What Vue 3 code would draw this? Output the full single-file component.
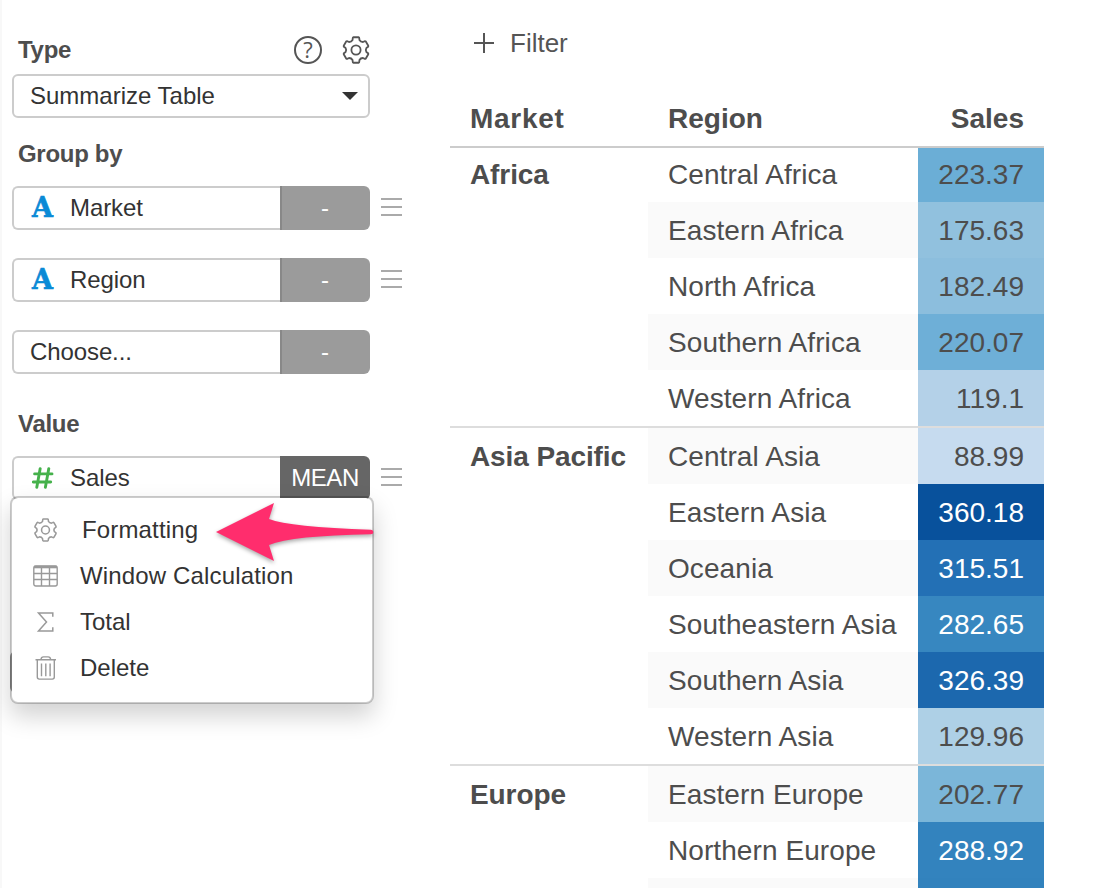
<script setup>
const groupBy = [
  { label: 'Market', typed: true },
  { label: 'Region', typed: true },
  { label: 'Choose...', typed: false },
]

// Six-toothed cog outline around (14, 14)
const at = (deg, r) => {
  const a = (deg * Math.PI) / 180
  return `${(14 + r * Math.sin(a)).toFixed(2)} ${(14 - r * Math.cos(a)).toFixed(2)}`
}
const gear = 'M' + [0, 60, 120, 180, 240, 300].map((d) =>
  `${at(d - 19, 10.6)}L${at(d - 16, 12)}Q${at(d - 15, 13)} ${at(d - 11, 13)}` +
  `L${at(d + 11, 13)}Q${at(d + 15, 13)} ${at(d + 16, 12)}L${at(d + 19, 10.6)}` +
  `Q${at(d + 30, 9.2)} ${at(d + 41, 10.6)}`).join('L') + 'Z'

const groups = [
  {
    market: 'Africa',
    rows: [
      ['Central Africa', '223.37', '#6baed6'],
      ['Eastern Africa', '175.63', '#91c1de'],
      ['North Africa', '182.49', '#8cbedd'],
      ['Southern Africa', '220.07', '#6eafd7'],
      ['Western Africa', '119.1', '#b4d1e8'],
    ],
  },
  {
    market: 'Asia Pacific',
    rows: [
      ['Central Asia', '88.99', '#c6dbef'],
      ['Eastern Asia', '360.18', '#08519c', true],
      ['Oceania', '315.51', '#2370b5', true],
      ['Southeastern Asia', '282.65', '#3787c0', true],
      ['Southern Asia', '326.39', '#1c68ae', true],
      ['Western Asia', '129.96', '#aed0e6'],
    ],
  },
  {
    market: 'Europe',
    rows: [
      ['Eastern Europe', '202.77', '#7bb6d9'],
      ['Northern Europe', '288.92', '#3383be', true],
      ['', '', '#3282bd', true],
    ],
  },
]
groups.flatMap((g) => g.rows).forEach((r, i) => { r.striped = i % 2 === 1 })
</script>

<template>
  <div class="page">
    <aside class="panel">
      <div class="head">
        <h3>Type</h3>
        <span class="help">?</span>
        <svg class="cog" width="28" height="28" viewBox="0 0 28 28" fill="none" stroke="#555" stroke-width="1.8" stroke-linejoin="round">
          <path :d="gear" />
          <circle cx="14" cy="14" r="4.6" />
        </svg>
      </div>
      <div class="select">
        <span>Summarize Table</span>
        <svg width="16" height="8" viewBox="0 0 16 8"><path d="M0 0h16L8 8z" fill="#333" /></svg>
      </div>
      <h3 class="group-title">Group by</h3>
      <div v-for="g in groupBy" :key="g.label" class="row">
        <div class="field">
          <span v-if="g.typed" class="alpha">A</span>
          <span>{{ g.label }}</span>
        </div>
        <div class="func">-</div>
        <div v-if="g.typed" class="grip"><i /><i /><i /></div>
      </div>
      <h3 class="value-title">Value</h3>
      <div class="row">
        <div class="field">
          <svg class="hash" width="22" height="22" viewBox="0 0 22 22" fill="none" stroke="#45b14b" stroke-width="2.9" stroke-linecap="round">
            <path d="M8.2 1.6 4.8 20.3M16.8 1.6l-3.4 18.7M2.6 6.9h17.4M1.3 15h17.4" />
          </svg>
          <span>Sales</span>
        </div>
        <div class="func mean">MEAN</div>
        <div class="grip"><i /><i /><i /></div>
      </div>
      <div class="hidden-button" />
      <div class="menu">
        <div class="item fmt">
          <svg width="24" height="24" viewBox="0 0 28 28" fill="none" stroke="#999" stroke-width="1.8" stroke-linejoin="round">
            <path :d="gear" />
            <circle cx="14" cy="14" r="4.6" />
          </svg>
          <span>Formatting</span>
        </div>
        <div class="item win">
          <svg width="25" height="22" viewBox="0 0 25 22" fill="none" stroke="#999" stroke-width="1.4">
            <rect x=".8" y="1" width="23.4" height="20" rx="2" />
            <path d="M1 2h23" stroke-width="2.6" />
            <path d="M1 8.5h23M1 14.5h23M8.5 2v19M16.5 2v19" />
          </svg>
          <span>Window Calculation</span>
        </div>
        <div class="item">
          <svg width="24" height="20" viewBox="0 0 24 20" fill="none" stroke="#999" stroke-width="1.5">
            <path d="M19.3 4.8V1H5l8 9-8 9h14.3v-3.8" />
          </svg>
          <span>Total</span>
        </div>
        <div class="item del">
          <svg width="24" height="24" viewBox="0 0 24 24" fill="none" stroke="#999" stroke-width="1.4">
            <path d="M2 3.7h20.5M3.8 3.7v17.4q0 2 2 2h13q2 0 2-2V3.7M7.5 3.4Q7.7.9 10 .9h4.6q2.3 0 2.5 2.5M8 7.5v12.7M12.3 7.5v12.7M16.6 7.5v12.7" />
          </svg>
          <span>Delete</span>
        </div>
        <svg class="arrow" width="168" height="70" viewBox="0 0 168 70">
          <path d="M6 34 64 5 59 21Q80 29 161 31.8Q163.4 32 163.4 34Q163.4 36.2 161 36.2Q82 37.5 59 47L64 63Z" fill="#ff2d6d" />
        </svg>
      </div>
    </aside>
    <main class="main">
      <div class="filter">
        <svg width="20" height="20" viewBox="0 0 20 20"><path d="M0 10h20M10 0v20" stroke="#555" stroke-width="2" /></svg>
        <span>Filter</span>
      </div>
      <div class="thead"><b class="first">Market</b><b>Region</b><b class="num">Sales</b></div>
      <section v-for="g in groups" :key="g.market" class="group">
        <b class="market">{{ g.market }}</b>
        <div class="rows">
          <div v-for="r in g.rows" :key="r[0]" class="data" :class="{ striped: r.striped }">
            <span class="region">{{ r[0] }}</span>
            <span class="sales" :class="{ light: r[3] }" :style="{ background: r[2] }">{{ r[1] }}</span>
          </div>
        </div>
      </section>
    </main>
  </div>
</template>

<style>
body { background: #fff; overflow: hidden; }
</style>
<style scoped>
* { box-sizing: border-box; }
.page {
  display: flex; height: 888px; overflow: hidden; color: #4d4d4d;
  font-family: "Liberation Sans", Arial, sans-serif; background: #fff;
}
.panel {
  position: relative; width: 450px; flex: none; font-size: 24px; color: #333;
  border-left: 2px solid #f8f8f8; padding: 32px 0 0 10px;
}
h3 { margin: 0; padding-left: 6px; font-size: 24px; line-height: 36px; color: #4d4d4d; letter-spacing: -.3px; }
.head { display: flex; align-items: center; width: 358px; height: 42px; padding-bottom: 6px; }
.help {
  margin-left: auto; width: 28px; height: 28px; border: 2px solid #555; border-radius: 50%;
  font: 22px/23px "Open Sans", sans-serif; text-align: center; color: #555;
}
.cog { margin-left: 20px; }
.select {
  display: flex; align-items: center; justify-content: space-between; width: 358px; height: 44px;
  border: 2px solid #ccc; border-radius: 6px; padding: 0 10px 0 16px;
}
.group-title { margin-top: 18px; }
.row { display: flex; height: 44px; margin-top: 28px; }
.group-title + .row { margin-top: 14px; }
.value-title { margin-top: 32px; }
.value-title + .row { margin-top: 14px; }
.field {
  width: 268px; border: 2px solid #ccc; border-right: 0; border-radius: 6px 0 0 6px;
  display: flex; align-items: center; padding-left: 16px; letter-spacing: -.1px;
}
.alpha {
  width: 40px; padding-left: 2px; color: #0a8ad6; font: bold 27px/40px "DejaVu Serif", serif;
  -webkit-text-stroke: .6px #0a8ad6;
}
.hash { margin: 0 16px 0 2px; }
.func {
  width: 90px; background: #9b9b9b; border-left: 2px solid #888; border-radius: 0 6px 6px 0;
  color: #fff; text-align: center; line-height: 44px; padding-right: 2px;
}
.mean { background: #666; border-left-color: #666; letter-spacing: -.4px; }
.grip { width: 21px; margin: 12px 0 0 11px; display: flex; flex-direction: column; gap: 6px; }
.grip i { height: 2px; flex: none; background: #aaa; }
.hidden-button { position: absolute; left: 8px; top: 651px; width: 60px; height: 42px; border-radius: 6px; background: #999; }
.menu {
  position: absolute; left: 8px; top: 496px; width: 364px; height: 208px; padding: 9px 0 0 21px;
  background: #fff; border: 2px solid rgba(0, 0, 0, .2); border-radius: 8px; box-shadow: 0 12px 24px rgba(0, 0, 0, .18);
  background-clip: padding-box;
}
.item { display: flex; align-items: center; height: 46px; }
.item svg { flex: none; width: 25px; }
.item span { margin-left: 22px; }
.fmt span { margin-left: 24px; letter-spacing: .15px; }
.win span { letter-spacing: .15px; }
.menu .arrow { position: absolute; left: 198px; top: 0; width: 168px; overflow: visible; filter: drop-shadow(0 2px 2px rgba(0, 0, 0, .35)); }
.main { width: 594px; font-size: 28px; }
.filter { display: flex; align-items: center; gap: 16px; height: 90px; padding: 0 0 5px 24px; font-size: 26px; color: #555; }
.filter span { padding-top: 2px; }
.thead {
  display: grid; grid-template-columns: 198px 270px 126px; height: 58px; line-height: 58px;
  border-bottom: 2px solid #ccc;
}
.thead b { padding: 0 20px; }
.thead .first { letter-spacing: .7px; }
.thead .num { text-align: right; }
.group { display: flex; border-top: 2px solid #ddd; }
.thead + .group { border-top: 0; }
.market { width: 198px; padding-left: 20px; line-height: 58px; letter-spacing: -.1px; }
.data { display: grid; grid-template-columns: 270px 126px; height: 56px; line-height: 58px; }
.region { height: 56px; padding-left: 20px; white-space: nowrap; letter-spacing: .08px; }
.striped .region { background: #fafafa; }
.sales { height: 56px; text-align: right; padding-right: 20px; }
.light { color: #fff; }
.thead + .group .data:first-child { height: 54px; line-height: 54px; }
.thead + .group .data:first-child span { height: 54px; }
.thead + .group .market { line-height: 54px; }
</style>
